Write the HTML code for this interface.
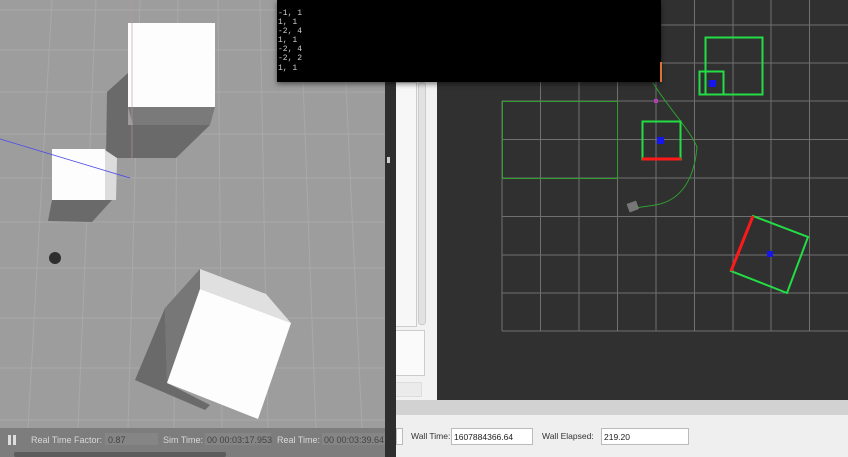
<!DOCTYPE html>
<html><head><meta charset="utf-8"><style>
*{margin:0;padding:0;box-sizing:border-box}
body{width:848px;height:457px;overflow:hidden;position:relative;background:#ececec;font-family:"Liberation Sans",sans-serif}
.abs{position:absolute}
</style></head><body>
<!-- Gazebo -->
<svg class="abs" style="left:0;top:0" width="386" height="457">
<rect width="386" height="457" fill="#9d9d9d"/>
<g stroke="#a9a9a9" stroke-width="1">
<line x1="0" y1="10" x2="386" y2="10"/><line x1="0" y1="50" x2="386" y2="50"/>
<line x1="0" y1="92" x2="386" y2="92"/><line x1="0" y1="134" x2="386" y2="134"/>
<line x1="0" y1="178" x2="386" y2="178"/><line x1="0" y1="222" x2="386" y2="222"/>
<line x1="0" y1="268" x2="386" y2="268"/><line x1="0" y1="318" x2="386" y2="318"/>
<line x1="0" y1="368" x2="386" y2="368"/><line x1="0" y1="420" x2="386" y2="420"/>
<line x1="52" y1="0" x2="28" y2="428"/><line x1="96" y1="0" x2="78" y2="428"/>
<line x1="140" y1="0" x2="128" y2="428"/><line x1="178" y1="0" x2="174" y2="428"/>
<line x1="218" y1="0" x2="222" y2="428"/><line x1="260" y1="0" x2="268" y2="428"/>
<line x1="300" y1="0" x2="316" y2="428"/><line x1="342" y1="0" x2="362" y2="428"/>
</g>
<!-- cube1 -->
<polygon points="128,73 107,92 106,158 176,158 210,125 128,125" fill="#6a6a6a"/>
<polygon points="128,107 215,107 210,125 133,125" fill="#7a7a7a"/>
<rect x="128" y="23" width="87" height="84" fill="#fdfdfd"/>
<line x1="132" y1="0" x2="132" y2="160" stroke="#b89898" stroke-width="0.6"/>
<!-- cube2 -->
<polygon points="52,200 48,221 92,222 112,200" fill="#6a6a6a"/>
<polygon points="105,150 117,158 116,200 105,200" fill="#dcdcdc"/>
<rect x="52" y="149" width="53" height="51" fill="#fdfdfd"/>
<line x1="0" y1="139" x2="130" y2="178" stroke="#4a4aee" stroke-width="0.8"/>
<ellipse cx="55" cy="258" rx="6" ry="6" fill="#2e2e2e"/>
<!-- cube3 -->
<polygon points="165,308 135,380 205,410 210,405 167,383" fill="#6a6a6a"/>
<polygon points="200,269 165,308 167,383 200,289" fill="#777"/>
<polygon points="200,269 266,294 291,323 200,289" fill="#e0e0e0"/>
<polygon points="200,289 291,323 258,419 167,383" fill="#fdfdfd"/>
<rect x="0" y="428" width="386" height="29" fill="#7d7d7d"/>
<rect x="8" y="435" width="3" height="10" fill="#ddd"/><rect x="13" y="435" width="3" height="10" fill="#ddd"/>
<rect x="105" y="433" width="53" height="12" fill="#858585"/>
<rect x="205" y="433" width="66" height="12" fill="#858585"/>
<rect x="322" y="433" width="64" height="12" fill="#858585"/>
<rect x="14" y="452" width="212" height="5" rx="2" fill="#5c5c5c"/>
<g font-size="9" fill="#d8d8d8"><text x="31" y="443">Real Time Factor:</text><text x="108" y="443" fill="#444">0.87</text>
<text x="163" y="443">Sim Time:</text><text x="207" y="443" fill="#444">00 00:03:17.953</text>
<text x="277" y="443">Real Time:</text><text x="324" y="443" fill="#444">00 00:03:39.64</text></g>
</svg>
<div class="abs" style="left:385px;top:0;width:11px;height:457px;background:#2e2e2e"></div>
<div class="abs" style="left:387px;top:157px;width:3px;height:6px;background:#ccc"></div>
<!-- middle panel -->
<div class="abs" style="left:396px;top:0;width:41px;height:400px;background:#f2f2f2"></div>
<div class="abs" style="left:396px;top:82px;width:21px;height:245px;background:#f7f7f7;border:1px solid #ccc;border-left:none"></div>
<div class="abs" style="left:418px;top:82px;width:8px;height:243px;background:#e2e2e2;border:1px solid #ccc;border-radius:3px"></div>
<div class="abs" style="left:396px;top:330px;width:29px;height:46px;background:#fafafa;border:1px solid #ccc;border-left:none"></div>
<div class="abs" style="left:396px;top:382px;width:26px;height:15px;background:#ebebeb;border:1px solid #ddd;border-left:none"></div>
<!-- rviz -->
<svg class="abs" style="left:437px;top:0" width="411" height="400">
<rect width="411" height="400" fill="#303030"/>
<g stroke="#707070" stroke-width="1" transform="translate(-437,0)">
<line x1="502" y1="101" x2="502" y2="331"/><line x1="540.5" y1="82" x2="540.5" y2="331"/>
<line x1="579" y1="82" x2="579" y2="331"/><line x1="617.5" y1="82" x2="617.5" y2="331"/>
<line x1="656" y1="82" x2="656" y2="331"/><line x1="694.5" y1="0" x2="694.5" y2="331"/>
<line x1="733" y1="0" x2="733" y2="331"/><line x1="771" y1="0" x2="771" y2="331"/>
<line x1="809.5" y1="0" x2="809.5" y2="331"/>
<line x1="661" y1="25" x2="848" y2="25"/><line x1="661" y1="63" x2="848" y2="63"/>
<line x1="502" y1="101" x2="848" y2="101"/><line x1="502" y1="139.5" x2="848" y2="139.5"/>
<line x1="502" y1="178" x2="848" y2="178"/><line x1="502" y1="216.5" x2="848" y2="216.5"/>
<line x1="502" y1="255" x2="848" y2="255"/><line x1="502" y1="293" x2="848" y2="293"/>
<line x1="502" y1="331" x2="848" y2="331"/>
</g>
<g transform="translate(-437,0)" fill="none">
<rect x="502.5" y="101.5" width="115" height="77" stroke="#2fa02f" stroke-width="1"/>
<path d="M653,83 C670,110 690,130 697,147 C695,170 688,190 670,200 C660,206 645,206 635,208" stroke="#2fa02f" stroke-width="1"/>
<rect x="642.5" y="121.5" width="38" height="38" stroke="#22dd44" stroke-width="2"/>
<line x1="642" y1="159" x2="681" y2="159" stroke="#ff1a1a" stroke-width="3"/>
<rect x="705.5" y="37.5" width="57" height="57" stroke="#22dd44" stroke-width="2"/>
<rect x="699.5" y="71.5" width="24" height="23" stroke="#22dd44" stroke-width="2"/>
<polygon points="753,216 808,237 787,293 731,271" stroke="#22dd44" stroke-width="2"/>
<line x1="753" y1="216" x2="731" y2="271" stroke="#ff1a1a" stroke-width="3"/>
<rect x="657" y="137" width="7" height="7" fill="#1515ee"/>
<rect x="709" y="80" width="7" height="7" fill="#1515ee"/>
<rect x="767" y="251" width="6" height="6" fill="#1515ee"/>
<rect x="654" y="99" width="4" height="4" fill="#b040b0"/>
<rect x="628" y="202" width="10" height="9" fill="#777" transform="rotate(-20 633 207)"/>
</g>
</svg>
<!-- terminal -->
<div class="abs" style="left:277px;top:0;width:384px;height:82px;background:#000;box-shadow:0 2px 5px rgba(0,0,0,.5)"></div>
<div class="abs" style="left:660px;top:62px;width:2px;height:20px;background:#e07030"></div>
<pre class="abs" style="left:278px;top:9px;font-family:'Liberation Mono',monospace;font-size:8px;line-height:9.1px;color:#ccc">-1, 1
1, 1
-2, 4
1, 1
-2, 4
-2, 2
1, 1</pre>
<!-- bottom bar -->
<div class="abs" style="left:396px;top:400px;width:452px;height:15px;background:#d2d2d2"></div>
<div class="abs" style="left:396px;top:415px;width:452px;height:42px;background:#efefef"></div>
<div class="abs" style="left:396px;top:428px;width:7px;height:17px;border:1px solid #bbb;background:#fafafa"></div>
<div class="abs" style="left:411px;top:431px;font-size:8.5px;color:#333">Wall Time:</div>
<div class="abs" style="left:451px;top:428px;width:82px;height:17px;border:1px solid #bbb;background:#fff;font-size:8.5px;padding:3px 2px;color:#222">1607884366.64</div>
<div class="abs" style="left:542px;top:431px;font-size:8.5px;color:#333">Wall Elapsed:</div>
<div class="abs" style="left:601px;top:428px;width:88px;height:17px;border:1px solid #bbb;background:#fff;font-size:8.5px;padding:3px 2px;color:#222">219.20</div>
</body></html>
